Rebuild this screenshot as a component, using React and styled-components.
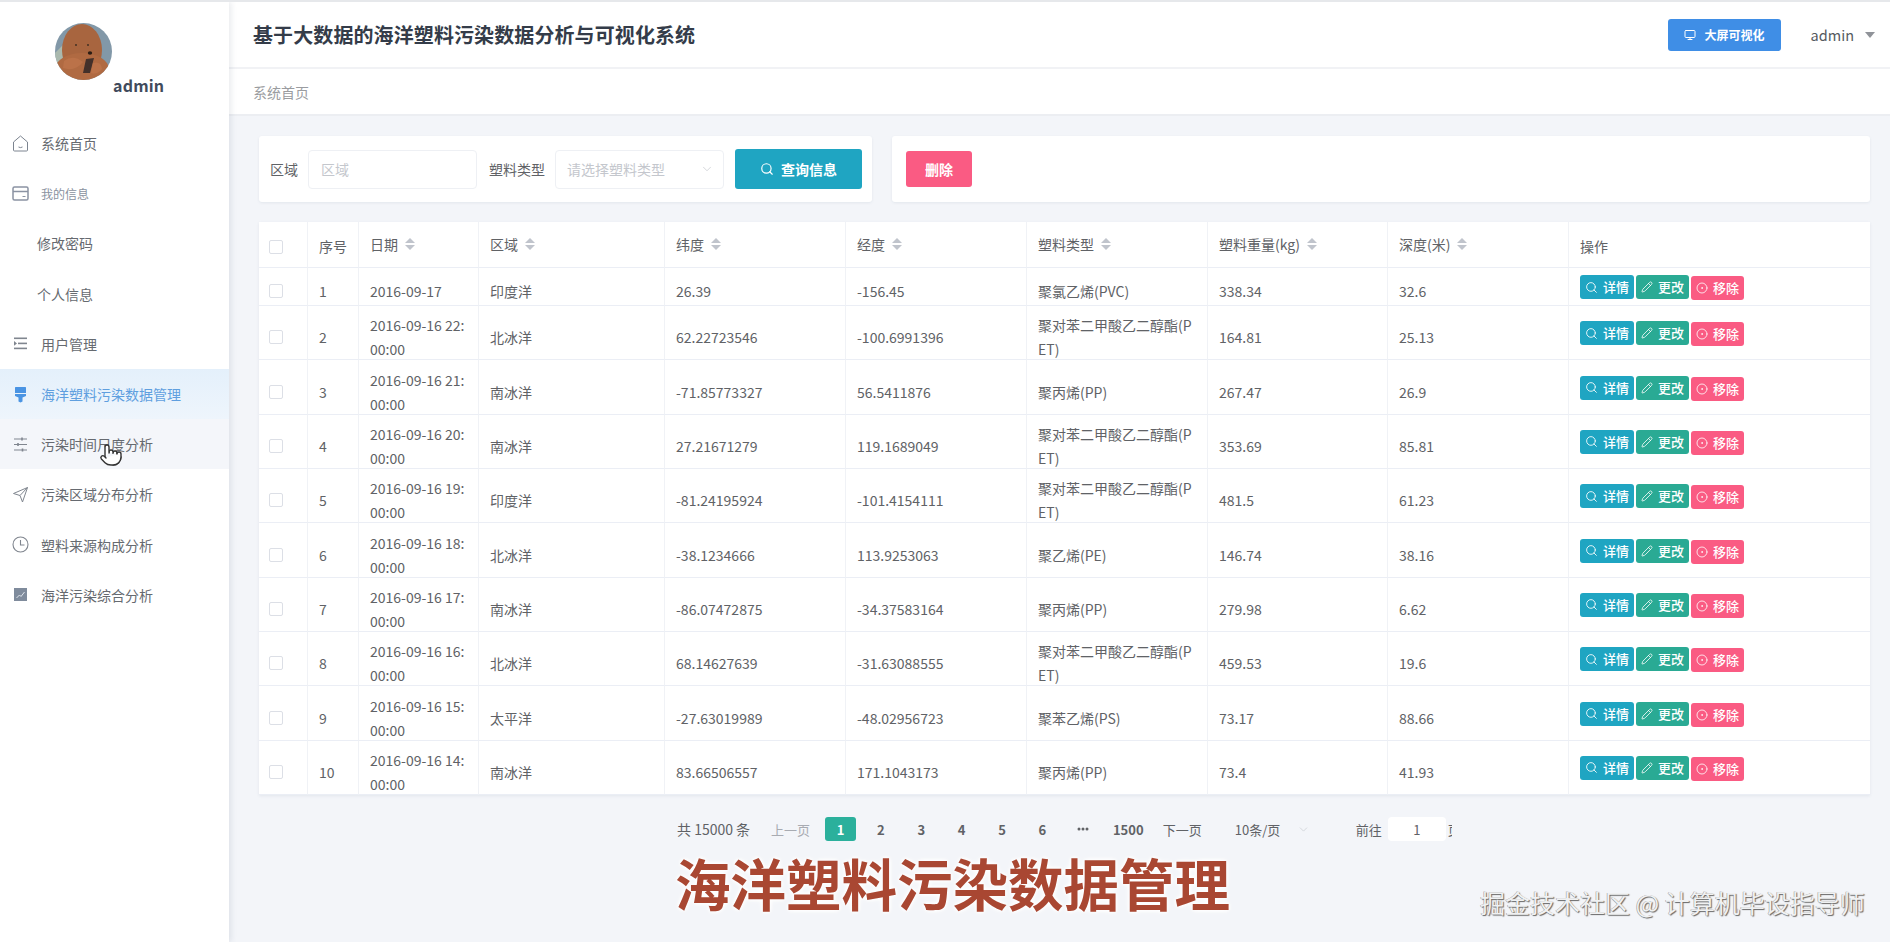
import React from "react";
import styled, { createGlobalStyle } from "styled-components";
import { Search, Pencil, CircleDot, Monitor, ChevronDown, Pointer } from "lucide-react";

const FONT = `"Noto Sans CJK SC", "Noto Sans", sans-serif`;

const GlobalStyle = createGlobalStyle`
  html, body {
    margin: 0;
    padding: 0;
    background: #f3f5f9;
    font-family: ${FONT};
  }
  * { box-sizing: border-box; }
`;

const Page = styled.div`
  position: relative;
  display: flex;
  width: 1890px;
  height: 942px;
  overflow: hidden;
  border-top: 2px solid #e6e8eb;
  background: #f3f5f9;
`;

const Sidebar = styled.aside`
  position: relative;
  z-index: 2;
  flex: 0 0 229px;
  background: #fff;
  box-shadow: 2px 0 6px rgba(30, 50, 80, 0.1);
`;

const Profile = styled.div`
  height: 116px;
  padding-top: 21px;
`;

const AvatarBox = styled.div`
  width: 57px;
  height: 57px;
  margin-left: 55px;
  border-radius: 50%;
  overflow: hidden;
`;

const ProfileName = styled.div`
  margin: -6px 0 0 113px;
  font-size: 16px;
  line-height: 22px;
  font-weight: 700;
  letter-spacing: 0.2px;
  color: #414b5c;
`;

const MenuRow = styled.div`
  display: flex;
  align-items: center;
  height: 50.2px;
  padding-left: ${(p) => (p.$sub ? "37px" : "12px")};
  font-size: ${(p) => (p.$small ? "12px" : "14px")};
  color: ${(p) => (p.$active ? "#5f9fdf" : p.$small ? "#8a92a0" : "#666a70")};
  background: ${(p) =>
    p.$active ? "linear-gradient(#e4f0fb, #eef5fc)" : p.$hover ? "#f4f6fa" : "transparent"};
`;

const MenuIcon = styled.svg`
  flex: 0 0 17px;
  width: 17px;
  height: 17px;
  margin-right: 12px;
`;

const HandCursor = styled.div`
  position: absolute;
  left: 99px;
  top: 441px;
  color: #333;
  line-height: 0;
`;

const Main = styled.main`
  flex: 1;
  min-width: 0;
`;

const TopBar = styled.header`
  display: flex;
  align-items: center;
  justify-content: space-between;
  height: 67px;
  padding: 0 15px 0 24px;
  background: #fff;
  border-bottom: 2px solid #f1f2f5;
`;

const Title = styled.h1`
  margin: 0;
  font-size: 20px;
  line-height: 28px;
  font-weight: 700;
  letter-spacing: 0.1px;
  color: #343c49;
`;

const TopActions = styled.div`
  display: flex;
  align-items: center;
`;

const ScreenButton = styled.div`
  display: flex;
  align-items: center;
  justify-content: center;
  gap: 9px;
  width: 113px;
  height: 32px;
  border-radius: 3px;
  background: #3f8ee6;
  color: #fff;
  font-size: 12px;
  font-weight: 700;
`;

const UserName = styled.span`
  margin-left: 30px;
  font-size: 14.5px;
  color: #555a60;
`;

const Caret = styled.i`
  width: 0;
  height: 0;
  margin-left: 11px;
  border-left: 5px solid transparent;
  border-right: 5px solid transparent;
  border-top: 6px solid #909399;
`;

const Crumbs = styled.div`
  display: flex;
  align-items: center;
  height: 47px;
  padding-left: 24px;
  background: #fff;
  border-bottom: 2px solid #eceef2;
  font-size: 14px;
  color: #9a9ca0;
`;

const Content = styled.div`
  padding: 20px 20px 0 30px;
`;

const FilterRow = styled.div`
  display: flex;
  gap: 20px;
  height: 66px;
`;

const Card = styled.div`
  display: flex;
  align-items: center;
  flex: ${(p) => (p.$grow ? 1 : "0 0 613px")};
  padding-left: ${(p) => (p.$grow ? "14px" : "11px")};
  background: #fff;
  border-radius: 3px;
  box-shadow: 0 1px 3px rgba(40, 60, 90, 0.08);
`;

const FieldLabel = styled.label`
  margin-right: 10px;
  font-size: 14px;
  color: #606266;
  white-space: nowrap;
`;

const TextInput = styled.input`
  width: 169px;
  height: 39px;
  margin-right: 12px;
  padding: 0 12px;
  border: 1px solid #eef0f4;
  border-radius: 4px;
  outline: none;
  font-family: ${FONT};
  font-size: 14px;
  &::placeholder {
    color: #c4c7cd;
  }
`;

const SelectBox = styled.div`
  display: flex;
  align-items: center;
  justify-content: space-between;
  width: 169px;
  height: 39px;
  margin-right: 11px;
  padding: 0 9px 0 11px;
  border: 1px solid #eef0f4;
  border-radius: 4px;
  font-size: 14px;
  color: #c4c7cd;
`;

const SearchButton = styled.div`
  display: flex;
  align-items: center;
  justify-content: center;
  gap: 7px;
  width: 127px;
  height: 40px;
  border-radius: 3px;
  background: #1fa5c2;
  color: #fff;
  font-size: 14px;
  font-weight: 700;
`;

const DeleteButton = styled.div`
  display: flex;
  align-items: center;
  justify-content: center;
  width: 66px;
  height: 36px;
  border-radius: 3px;
  background: #fa5b83;
  color: #fff;
  font-size: 14px;
  font-weight: 700;
`;

const Table = styled.table`
  width: 1611px;
  margin-top: 20px;
  table-layout: fixed;
  border-collapse: separate;
  border-spacing: 0;
  background: #fff;
  box-shadow: 0 1px 3px rgba(40, 60, 90, 0.08);
  font-size: 14px;
  color: #606266;
`;

const HeadCell = styled.th`
  height: 46px;
  padding: ${(p) => (p.$sort ? "0 11px 2px" : "2px 11px 0")};
  border-right: 1px solid #f0f2f6;
  border-bottom: 1px solid #ebeef5;
  font-weight: 400;
  text-align: left;
  &:last-child {
    border-right: 0;
  }
`;

const HeadInner = styled.div`
  display: flex;
  align-items: center;
  gap: 7px;
`;

const SortArrows = styled.span`
  display: inline-flex;
  flex-direction: column;
  gap: 2px;
  &::before,
  &::after {
    content: "";
    width: 0;
    height: 0;
    border-left: 5px solid transparent;
    border-right: 5px solid transparent;
  }
  &::before {
    border-bottom: 5px solid #c0c4cc;
  }
  &::after {
    border-top: 5px solid #c0c4cc;
  }
`;

const Row = styled.tr`
  height: ${(p) => (p.$first ? 38 : 54.35)}px;
`;

const Cell = styled.td`
  padding: ${(p) => (p.$action ? "2px 0 0 11px" : "7px 11px 0")};
  border-right: 1px solid #f0f2f6;
  border-bottom: 1px solid #ebeef5;
  line-height: 24px;
  vertical-align: middle;
  word-break: break-all;
  &:last-child {
    border-right: 0;
  }
`;

const CellText = styled.div`
  margin-bottom: -2px;
`;

const Checkbox = styled.span`
  display: block;
  width: 14px;
  height: 14px;
  margin: ${(p) => (p.$head ? "2px 0 0 -1px" : "0 0 -2px -1px")};
  border: 1px solid #dcdfe6;
  border-radius: 2px;
  background: #fff;
`;

const Actions = styled.div`
  display: flex;
  gap: 2px;
`;

const ActionButton = styled.span`
  display: flex;
  align-items: center;
  justify-content: center;
  gap: 5px;
  width: ${(p) => p.$width}px;
  height: 24px;
  margin-top: ${(p) => (p.$drop ? "1px" : "0")};
  border-radius: 3px;
  background: ${(p) => p.$color};
  color: #fff;
  font-size: 13px;
  font-weight: 500;
  line-height: 24px;
`;

const Pagination = styled.div`
  display: flex;
  align-items: center;
  height: 24px;
  margin-top: 22px;
  padding-left: 418px;
  font-size: 13px;
  color: #606266;
`;

const Total = styled.span`
  width: 94px;
  font-size: 14px;
  white-space: nowrap;
`;

const PrevNext = styled.span`
  width: ${(p) => p.$width}px;
  color: ${(p) => (p.$disabled ? "#a8abb2" : "#606266")};
  white-space: nowrap;
`;

const PageNo = styled.span`
  display: flex;
  align-items: center;
  justify-content: center;
  flex: 0 0 ${(p) => p.$width || 31}px;
  height: 24px;
  margin-right: ${(p) => (p.$last ? "14px" : "9.4px")};
  border-radius: 3px;
  background: ${(p) => (p.$active ? "#2bb09c" : "transparent")};
  color: ${(p) => (p.$active ? "#fff" : "#606266")};
  font-weight: 700;
  font-size: 13px;
`;

const SizeSelect = styled.span`
  display: flex;
  align-items: center;
  width: 155px;
  padding-left: 34px;
  color: #606266;
  white-space: nowrap;
`;

const SizeArrow = styled.span`
  display: flex;
  margin-left: 17px;
  color: #c4c7cd;
`;

const JumpInput = styled.span`
  display: flex;
  align-items: center;
  justify-content: center;
  width: 58px;
  height: 24px;
  margin: 0 2px 0 6px;
  border-radius: 4px;
  background: #fff;
  font-size: 13px;
`;

const ClippedUnit = styled.span`
  display: block;
  width: 4px;
  overflow: hidden;
  white-space: nowrap;
`;

const Caption = styled.div`
  position: absolute;
  z-index: 3;
  left: 675px;
  top: 840px;
  font-size: 55.5px;
  line-height: 80px;
  font-weight: 700;
  color: #a94732;
  white-space: nowrap;
  text-shadow: 0 0 4px #fff, 0 0 4px #fff, 0 0 6px #fff;
`;

const Watermark = styled.div`
  position: absolute;
  z-index: 3;
  left: 1480px;
  top: 882px;
  font-size: 25px;
  line-height: 36px;
  color: #f0f1f2;
  white-space: nowrap;
  text-shadow: 1px 1px 1px #666, -0.5px -0.5px 0 #999;
`;

const Bear = () => (
  <svg viewBox="0 0 57 57" width="57" height="57">
    <rect width="57" height="57" fill="#8298a8" />
    <path d="M0 30 L12 18 L12 57 L0 57 Z" fill="#aab9ae" />
    <ellipse cx="27" cy="27" rx="20" ry="26" fill="#a8653f" />
    <ellipse cx="27" cy="46" rx="27" ry="16" fill="#b06a42" />
    <path d="M9 38 Q18 31 28 39 Q20 49 8 45 Z" fill="#bb7249" />
    <circle cx="21" cy="22" r="0.9" fill="#3a2a20" />
    <circle cx="33" cy="22" r="0.9" fill="#3a2a20" />
    <ellipse cx="35" cy="30" rx="2.2" ry="1.7" fill="#2a1c14" />
    <path d="M31 36 L39 35 L35 50 L28 50 Z" fill="#43302a" />
    <path d="M38 40 Q46 38 47 46 Q42 52 36 50 Z" fill="#bb7249" />
  </svg>
);

const icons = {
  home: (
    <MenuIcon viewBox="0 0 17 17" fill="none" stroke="#7c8490" strokeWidth="1">
      <path d="M1.5 7 L8.5 1 L15.5 7 V15 Q15.5 16 14.5 16 H2.5 Q1.5 16 1.5 15 Z" />
      <path d="M6.5 12 Q8.5 13.2 10.5 12" />
    </MenuIcon>
  ),
  wallet: (
    <MenuIcon viewBox="0 0 17 17" fill="none" stroke="#8b93a3" strokeWidth="1.5">
      <rect x="1" y="2" width="15" height="13" rx="1.5" />
      <path d="M1 6.5 H16" />
      <path d="M10.5 11.5 H13.5" strokeWidth="1" />
    </MenuIcon>
  ),
  fold: (
    <MenuIcon viewBox="0 0 17 17" fill="#80868f">
      <rect x="2" y="2.5" width="13" height="1.6" />
      <rect x="6" y="7.6" width="9" height="1.6" />
      <rect x="2" y="12.6" width="13" height="1.6" />
      <path d="M2 6 L5 8.4 L2 10.8 Z" />
    </MenuIcon>
  ),
  brush: (
    <MenuIcon viewBox="0 0 17 17" fill="#4a94e3">
      <path d="M3 1.5 Q3 1 3.5 1 H13.5 Q14 1 14 1.5 V7 H3 Z" />
      <path d="M3 8 H14 V10 L10.5 11.5 V15.5 L8.5 16.5 L6.5 15.5 V11.5 L3 10 Z" />
    </MenuIcon>
  ),
  sliders: (
    <MenuIcon viewBox="0 0 17 17" fill="none" stroke="#80868f" strokeWidth="1.1">
      <path d="M2 3 H15 M2 8.5 H15 M2 14 H15" />
      <path d="M10 1.5 V4.5 M6 7 V10 M10.5 12.5 V15.5" strokeWidth="1.6" />
    </MenuIcon>
  ),
  plane: (
    <MenuIcon viewBox="0 0 17 17" fill="none" stroke="#80868f" strokeWidth="1" strokeLinejoin="round">
      <path d="M15.5 1.5 L1.5 7.5 L8 9.5 L10.5 16 Z" />
      <path d="M8 9.5 L15.5 1.5" />
    </MenuIcon>
  ),
  clock: (
    <MenuIcon viewBox="0 0 17 17" fill="none" stroke="#80868f" strokeWidth="1.1">
      <circle cx="8.5" cy="8.5" r="7.5" />
      <path d="M8.5 4 V9 H12.5" />
    </MenuIcon>
  ),
  chart: (
    <MenuIcon viewBox="0 0 17 17">
      <rect x="2" y="2" width="13" height="13" fill="#7f8b9c" />
      <path d="M4.5 12 L7.5 9 L9 10.5 L12.5 6" fill="none" stroke="#dfe5ec" strokeWidth="1" />
    </MenuIcon>
  ),
};

const menu = [
  { label: "系统首页", icon: "home" },
  { label: "我的信息", icon: "wallet", small: true },
  { label: "修改密码", sub: true },
  { label: "个人信息", sub: true },
  { label: "用户管理", icon: "fold" },
  { label: "海洋塑料污染数据管理", icon: "brush", active: true },
  { label: "污染时间尺度分析", icon: "sliders", hover: true },
  { label: "污染区域分布分析", icon: "plane" },
  { label: "塑料来源构成分析", icon: "clock" },
  { label: "海洋污染综合分析", icon: "chart" },
];

const columns = [
  { width: 49 },
  { width: 51, label: "序号" },
  { width: 120, label: "日期", sort: true },
  { width: 186, label: "区域", sort: true },
  { width: 181, label: "纬度", sort: true },
  { width: 181, label: "经度", sort: true },
  { width: 181, label: "塑料类型", sort: true },
  { width: 180, label: "塑料重量(kg)", sort: true },
  { width: 181, label: "深度(米)", sort: true },
  { width: 301, label: "操作" },
];

const PET = "聚对苯二甲酸乙二醇酯(PET)";

const rows = [
  ["2016-09-17", "印度洋", "26.39", "-156.45", "聚氯乙烯(PVC)", "338.34", "32.6"],
  ["2016-09-16 22:00:00", "北冰洋", "62.22723546", "-100.6991396", PET, "164.81", "25.13"],
  ["2016-09-16 21:00:00", "南冰洋", "-71.85773327", "56.5411876", "聚丙烯(PP)", "267.47", "26.9"],
  ["2016-09-16 20:00:00", "南冰洋", "27.21671279", "119.1689049", PET, "353.69", "85.81"],
  ["2016-09-16 19:00:00", "印度洋", "-81.24195924", "-101.4154111", PET, "481.5", "61.23"],
  ["2016-09-16 18:00:00", "北冰洋", "-38.1234666", "113.9253063", "聚乙烯(PE)", "146.74", "38.16"],
  ["2016-09-16 17:00:00", "南冰洋", "-86.07472875", "-34.37583164", "聚丙烯(PP)", "279.98", "6.62"],
  ["2016-09-16 16:00:00", "北冰洋", "68.14627639", "-31.63088555", PET, "459.53", "19.6"],
  ["2016-09-16 15:00:00", "太平洋", "-27.63019989", "-48.02956723", "聚苯乙烯(PS)", "73.17", "88.66"],
  ["2016-09-16 14:00:00", "南冰洋", "83.66506557", "171.1043173", "聚丙烯(PP)", "73.4", "41.93"],
];

const MoreDots = () => (
  <svg viewBox="0 0 12 4" width="12" height="4" fill="#606266">
    <circle cx="2" cy="2" r="1.5" />
    <circle cx="6" cy="2" r="1.5" />
    <circle cx="10" cy="2" r="1.5" />
  </svg>
);

export default function App() {
  return (
    <Page>
      <GlobalStyle />
      <Sidebar>
        <Profile>
          <AvatarBox>
            <Bear />
          </AvatarBox>
          <ProfileName>admin</ProfileName>
        </Profile>
        {menu.map((item) => (
          <MenuRow
            key={item.label}
            $sub={item.sub}
            $small={item.small}
            $active={item.active}
            $hover={item.hover}
          >
            {item.icon && icons[item.icon]}
            {item.label}
          </MenuRow>
        ))}
        <HandCursor>
          <Pointer size={24} strokeWidth={1.4} fill="#fff" />
        </HandCursor>
      </Sidebar>

      <Main>
        <TopBar>
          <Title>基于大数据的海洋塑料污染数据分析与可视化系统</Title>
          <TopActions>
            <ScreenButton>
              <Monitor size={12} />
              大屏可视化
            </ScreenButton>
            <UserName>admin</UserName>
            <Caret />
          </TopActions>
        </TopBar>
        <Crumbs>系统首页</Crumbs>

        <Content>
          <FilterRow>
            <Card>
              <FieldLabel>区域</FieldLabel>
              <TextInput placeholder="区域" />
              <FieldLabel>塑料类型</FieldLabel>
              <SelectBox>
                请选择塑料类型
                <ChevronDown size={14} strokeWidth={1.2} />
              </SelectBox>
              <SearchButton>
                <Search size={14} />
                查询信息
              </SearchButton>
            </Card>
            <Card $grow>
              <DeleteButton>删除</DeleteButton>
            </Card>
          </FilterRow>

          <Table>
            <colgroup>
              {columns.map((col, i) => (
                <col key={i} style={{ width: col.width }} />
              ))}
            </colgroup>
            <thead>
              <tr>
                {columns.map((col, i) => (
                  <HeadCell key={i} $sort={col.sort}>
                    {i === 0 ? (
                      <Checkbox $head />
                    ) : (
                      <HeadInner>
                        {col.label}
                        {col.sort && <SortArrows />}
                      </HeadInner>
                    )}
                  </HeadCell>
                ))}
              </tr>
            </thead>
            <tbody>
              {rows.map((row, i) => (
                <Row key={i} $first={i === 0}>
                  <Cell>
                    <Checkbox />
                  </Cell>
                  <Cell>
                    <CellText>{i + 1}</CellText>
                  </Cell>
                  {row.map((value, j) => (
                    <Cell key={j}>
                      <CellText>{value}</CellText>
                    </Cell>
                  ))}
                  <Cell $action>
                    <Actions>
                      <ActionButton $width={54} $color="#1fa5c2">
                        <Search size={13} strokeWidth={1.6} />
                        详情
                      </ActionButton>
                      <ActionButton $width={53} $color="#2aaa94">
                        <Pencil size={12} strokeWidth={1.6} />
                        更改
                      </ActionButton>
                      <ActionButton $width={53} $color="#fa5b83" $drop>
                        <CircleDot size={12} strokeWidth={1.6} />
                        移除
                      </ActionButton>
                    </Actions>
                  </Cell>
                </Row>
              ))}
            </tbody>
          </Table>

          <Pagination>
            <Total>共 15000 条</Total>
            <PrevNext $width={54} $disabled>
              上一页
            </PrevNext>
            <PageNo $active>1</PageNo>
            <PageNo>2</PageNo>
            <PageNo>3</PageNo>
            <PageNo>4</PageNo>
            <PageNo>5</PageNo>
            <PageNo>6</PageNo>
            <PageNo>
              <MoreDots />
            </PageNo>
            <PageNo $width={41} $last>
              1500
            </PageNo>
            <PrevNext $width={38}>下一页</PrevNext>
            <SizeSelect>
              10条/页
              <SizeArrow>
                <ChevronDown size={13} strokeWidth={1.2} />
              </SizeArrow>
            </SizeSelect>
            <span>前往</span>
            <JumpInput>1</JumpInput>
            <ClippedUnit>页</ClippedUnit>
          </Pagination>
        </Content>
      </Main>

      <Caption>海洋塑料污染数据管理</Caption>
      <Watermark>掘金技术社区 @ 计算机毕设指导师</Watermark>
    </Page>
  );
}
